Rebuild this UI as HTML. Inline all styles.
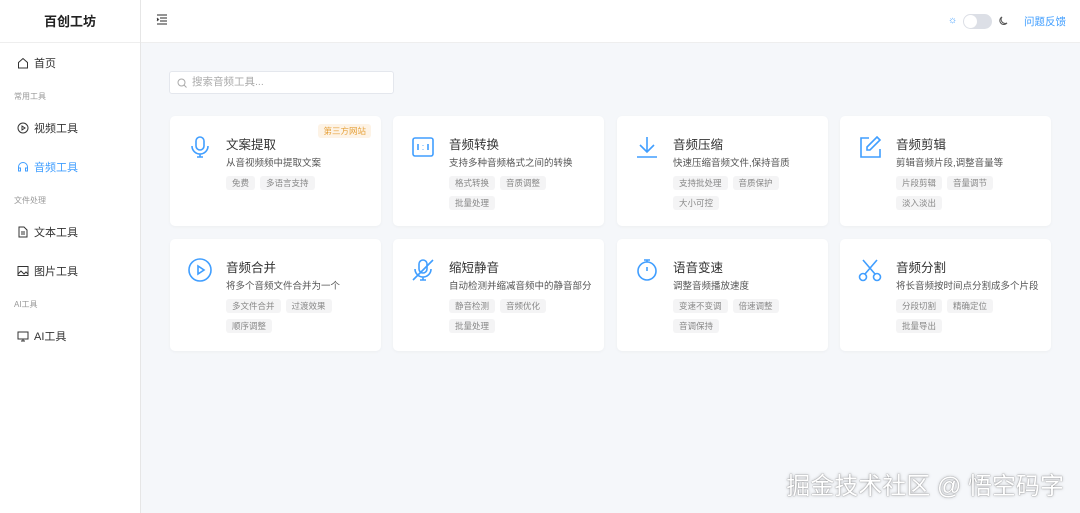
<!DOCTYPE html>
<html><head><meta charset="utf-8"><style>
*{margin:0;padding:0;box-sizing:border-box}
body{width:1080px;height:513px;overflow:hidden;font-family:"Liberation Sans","Noto Sans CJK SC",sans-serif;background:#f5f7fa;position:relative;color:#333}
.side{position:absolute;left:0;top:0;width:141px;height:513px;background:#fff;border-right:1px solid #e6e6e6}
.logo{height:43px;border-bottom:1px solid #eee;text-align:center;line-height:43px;font-size:13px;font-weight:bold;color:#222}
.it{position:absolute;left:17px;font-size:11px;color:#333;display:flex;align-items:center;gap:5px}
.it svg{width:12px;height:12px}
.grp{position:absolute;left:14px;font-size:8px;color:#999}
.head{position:absolute;left:141px;top:0;right:0;height:43px;background:#fff;border-bottom:1px solid #eee}
.search{position:absolute;left:169px;top:71px;width:225px;height:23px;background:#fff;border:1px solid #e4e7ed;border-radius:3px;font-size:10.5px;color:#aaa;line-height:21px;padding-left:22px}
.card{position:absolute;width:211px;background:#fff;border-radius:5px;box-shadow:0 1px 3px rgba(0,0,0,.04)}
.card .ic{position:absolute;left:18px;top:19px;width:24px;height:24px}
.card .t{position:absolute;left:56px;top:18px;font-size:12.5px;color:#333}
.card .d{position:absolute;left:56px;top:39px;font-size:9.5px;color:#555;white-space:nowrap}
.tags{position:absolute;left:56px;top:60px;width:145px;display:flex;flex-wrap:wrap;gap:6px 5px}
.tag{background:#f4f4f5;color:#888;font-size:8.5px;padding:0 6px;height:14px;line-height:14px;border-radius:3px}
.badge{position:absolute;right:10px;top:8px;background:#fdf3e6;color:#e6a23c;font-size:8.5px;padding:0 5px;height:14px;line-height:14px;border-radius:3px}
.wm{position:absolute;right:16px;top:466px;font-size:24px;color:#fff;text-shadow:0 0 1px rgba(0,0,0,.6),0 0 3px rgba(0,0,0,.25)}
</style></head><body>
<div class="side">
<div class="logo">百创工坊</div>
<div class="it" style="top:55px"><svg viewBox="0 0 12 12" fill="none" stroke="#333" stroke-width="1"><path d="M1.5 5.5L6 1.5l4.5 4V11h-9z"/></svg>首页</div>
<div class="grp" style="top:91px">常用工具</div>
<div class="it" style="top:120px"><svg viewBox="0 0 12 12" fill="none" stroke="#333" stroke-width="1"><circle cx="6" cy="6" r="5"/><path d="M5 4v4l3-2z"/></svg>视频工具</div>
<div class="it" style="top:159px;color:#409eff"><svg viewBox="0 0 12 12" fill="none" stroke="#409eff" stroke-width="1"><path d="M1.5 9V6a4.5 4.5 0 019 0v3"/><rect x="1.5" y="7" width="2" height="3"/><rect x="8.5" y="7" width="2" height="3"/></svg>音频工具</div>
<div class="grp" style="top:195px">文件处理</div>
<div class="it" style="top:224px"><svg viewBox="0 0 12 12" fill="none" stroke="#333" stroke-width="1"><path d="M2 1h5l3 3v7H2z M4 6h4M4 8h4"/></svg>文本工具</div>
<div class="it" style="top:263px"><svg viewBox="0 0 12 12" fill="none" stroke="#333" stroke-width="1"><rect x="1" y="1.5" width="10" height="9"/><path d="M1 9l3-3 3 3 2-2 2 2"/></svg>图片工具</div>
<div class="grp" style="top:299px">AI工具</div>
<div class="it" style="top:328px"><svg viewBox="0 0 12 12" fill="none" stroke="#333" stroke-width="1"><rect x="1" y="2" width="10" height="7"/><path d="M4 11h4M6 9v2"/></svg>AI工具</div>
</div>
<div class="head">
<svg style="position:absolute;left:15px;top:14px" width="12" height="11" viewBox="0 0 12 11" stroke="#555" stroke-width="1.2"><path d="M1 1h10M4 4h7M4 7h7M1 10h10M1 4l1.5 1.5L1 7"/></svg>
<span style="position:absolute;left:807px;top:15px;font-size:10px;color:#409eff">☼</span>
<div style="position:absolute;left:822px;top:14px;width:29px;height:15px;border-radius:8px;background:#dcdfe6"><div style="position:absolute;left:1px;top:1px;width:13px;height:13px;border-radius:50%;background:#fff"></div></div>
<svg style="position:absolute;left:857px;top:16px" width="10" height="10" viewBox="0 0 10 10" fill="none" stroke="#555" stroke-width="1"><path d="M4 1a4 4 0 105 6A4 4 0 014 1z"/></svg>
<span style="position:absolute;left:883px;top:14px;font-size:10.5px;color:#409eff">问题反馈</span>
</div>
<div class="search"><svg style="position:absolute;left:7px;top:6px" width="10" height="10" viewBox="0 0 10 10" fill="none" stroke="#aaa"><circle cx="4.5" cy="4.5" r="3.5"/><path d="M7 7l2.5 2.5"/></svg>搜索音频工具...</div>

<div class="card" style="left:170px;top:116px;height:110px">
<svg class="ic" viewBox="0 0 24 24" fill="none" stroke="#409eff" stroke-width="1.6"><rect x="8" y="2" width="8" height="13" rx="4"/><path d="M4 11a8 8 0 0016 0M12 19v3M9 22h6"/></svg>
<div class="t">文案提取</div><div class="d">从音视频频中提取文案</div>
<div class="tags"><span class="tag">免费</span><span class="tag">多语言支持</span></div><div class="badge">第三方网站</div></div>

<div class="card" style="left:393px;top:116px;height:110px">
<svg class="ic" viewBox="0 0 24 24" fill="none" stroke="#409eff" stroke-width="1.6"><rect x="2" y="3" width="20" height="18" rx="2"/><path d="M7 9v6M17 9v6M12 10v.5M12 14v.5"/></svg>
<div class="t">音频转换</div><div class="d">支持多种音频格式之间的转换</div>
<div class="tags"><span class="tag">格式转换</span><span class="tag">音质调整</span><span class="tag">批量处理</span></div></div>

<div class="card" style="left:617px;top:116px;height:110px">
<svg class="ic" viewBox="0 0 24 24" fill="none" stroke="#409eff" stroke-width="1.6"><path d="M12 2v14M5 10l7 7 7-7M2 22h20"/></svg>
<div class="t">音频压缩</div><div class="d">快速压缩音频文件,保持音质</div>
<div class="tags"><span class="tag">支持批处理</span><span class="tag">音质保护</span><span class="tag">大小可控</span></div></div>

<div class="card" style="left:840px;top:116px;height:110px">
<svg class="ic" viewBox="0 0 24 24" fill="none" stroke="#409eff" stroke-width="1.6"><path d="M11 3H3v19h19v-8"/><path d="M19 2l3 3-10 10H9v-3z"/></svg>
<div class="t">音频剪辑</div><div class="d">剪辑音频片段,调整音量等</div>
<div class="tags"><span class="tag">片段剪辑</span><span class="tag">音量调节</span><span class="tag">淡入淡出</span></div></div>

<div class="card" style="left:170px;top:239px;height:112px">
<svg class="ic" viewBox="0 0 24 24" fill="none" stroke="#409eff" stroke-width="1.6"><circle cx="12" cy="12" r="11"/><path d="M10 8v8l6-4z"/></svg>
<div class="t">音频合并</div><div class="d">将多个音频文件合并为一个</div>
<div class="tags"><span class="tag">多文件合并</span><span class="tag">过渡效果</span><span class="tag">顺序调整</span></div></div>

<div class="card" style="left:393px;top:239px;height:112px">
<svg class="ic" viewBox="0 0 24 24" fill="none" stroke="#409eff" stroke-width="1.6"><rect x="8" y="2" width="8" height="13" rx="4"/><path d="M4 11a8 8 0 0016 0M12 19v3M9 22h6M2 22L22 2"/></svg>
<div class="t">缩短静音</div><div class="d">自动检测并缩减音频中的静音部分</div>
<div class="tags"><span class="tag">静音检测</span><span class="tag">音频优化</span><span class="tag">批量处理</span></div></div>

<div class="card" style="left:617px;top:239px;height:112px">
<svg class="ic" viewBox="0 0 24 24" fill="none" stroke="#409eff" stroke-width="1.6"><circle cx="12" cy="13" r="9"/><path d="M9 2h6M12 2v2M12 9v4"/></svg>
<div class="t">语音变速</div><div class="d">调整音频播放速度</div>
<div class="tags"><span class="tag">变速不变调</span><span class="tag">倍速调整</span><span class="tag">音调保持</span></div></div>

<div class="card" style="left:840px;top:239px;height:112px">
<svg class="ic" viewBox="0 0 24 24" fill="none" stroke="#409eff" stroke-width="1.6"><circle cx="5" cy="19" r="3.5"/><circle cx="19" cy="19" r="3.5"/><path d="M7 16L19 2M17 16L5 2"/></svg>
<div class="t">音频分割</div><div class="d">将长音频按时间点分割成多个片段</div>
<div class="tags"><span class="tag">分段切割</span><span class="tag">精确定位</span><span class="tag">批量导出</span></div></div>

<div class="wm">掘金技术社区 @ 悟空码字</div>
</body></html>
